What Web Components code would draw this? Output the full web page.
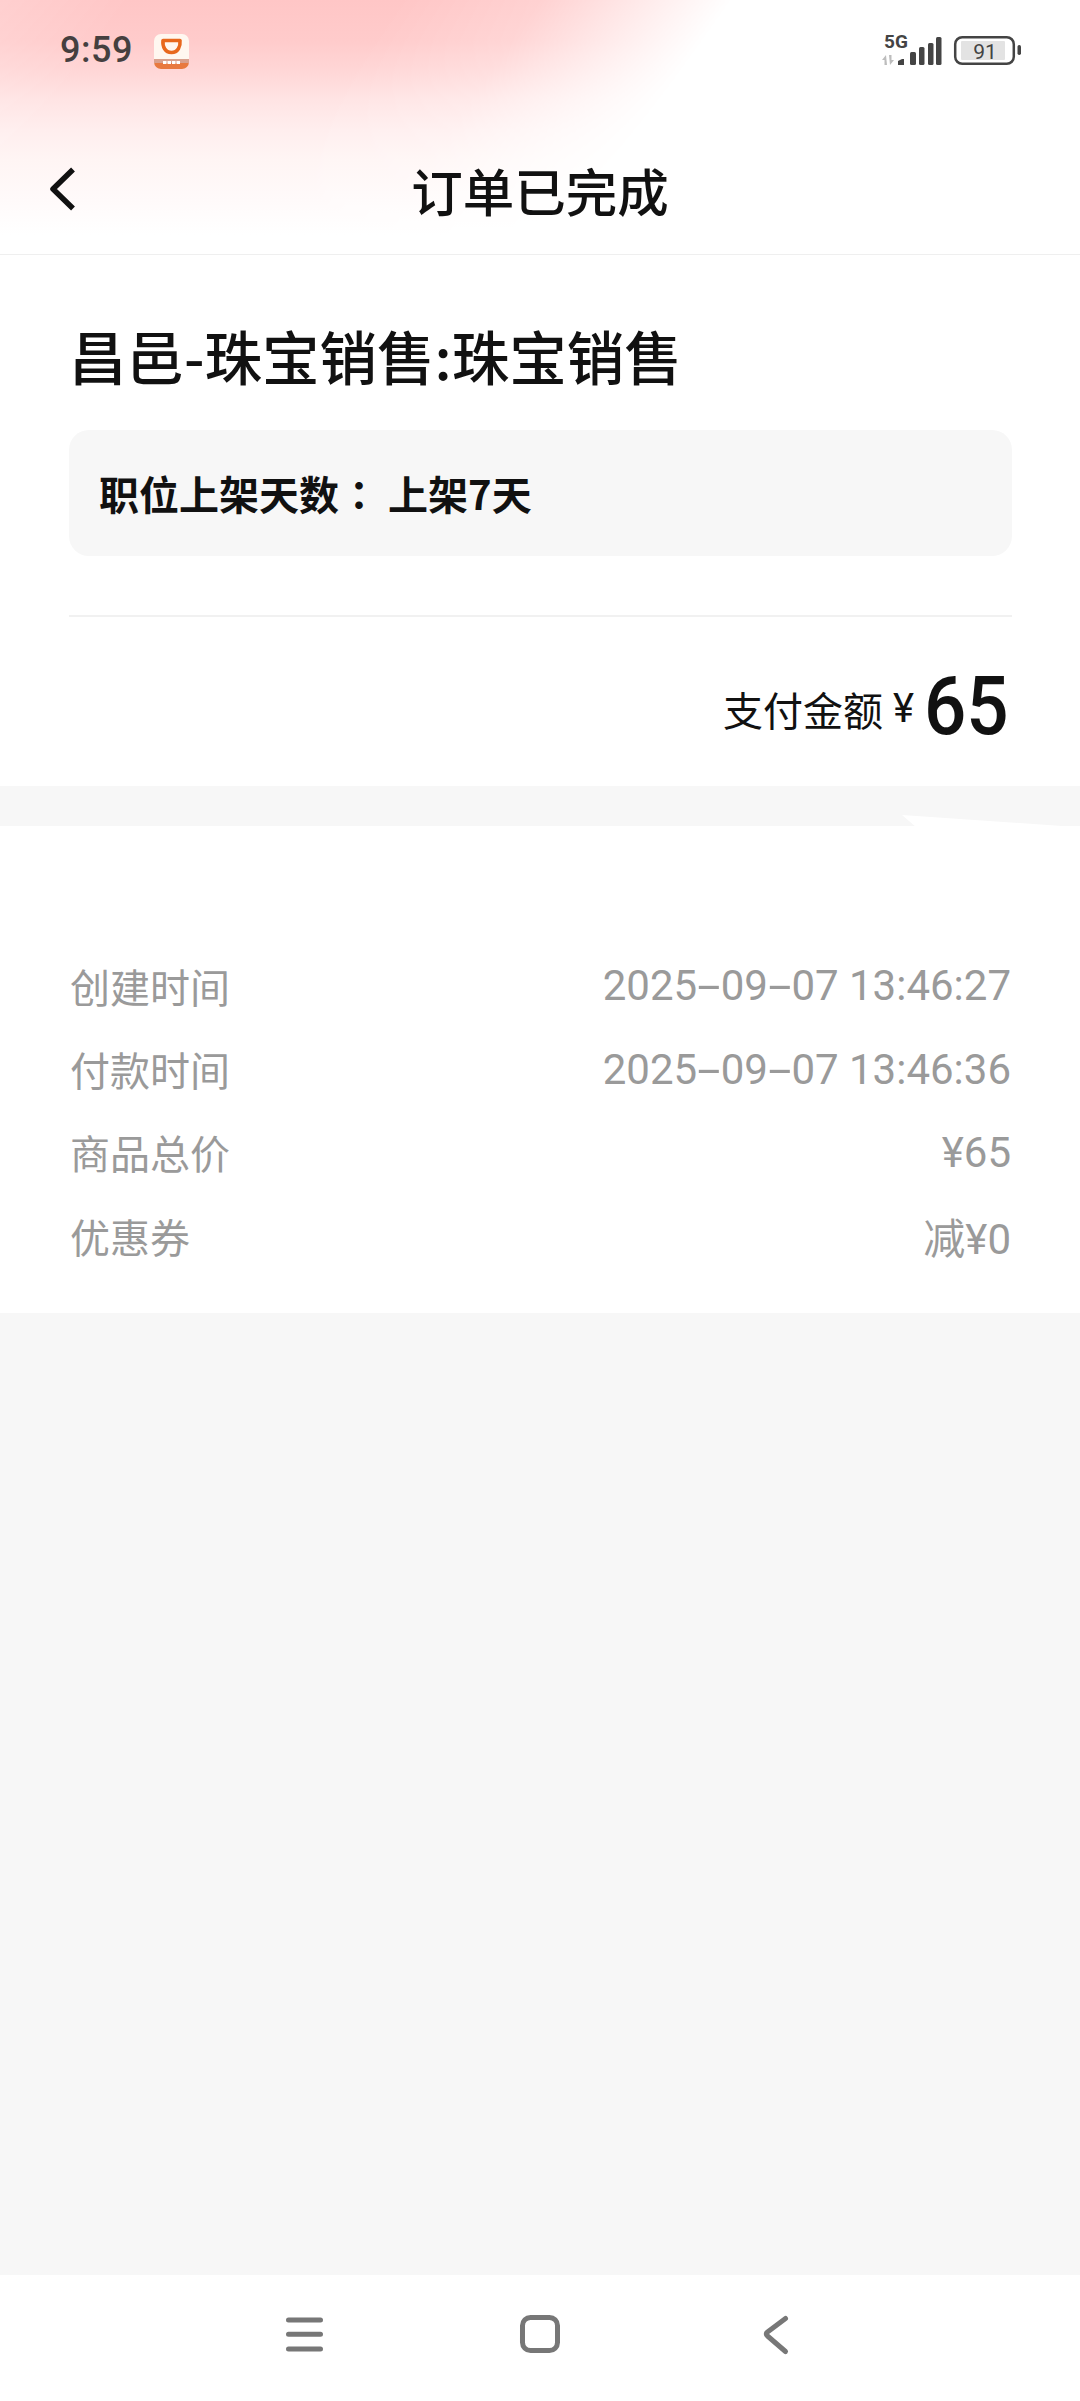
<!DOCTYPE html>
<html lang="zh">
<head>
<meta charset="utf-8">
<style>
html, body { margin: 0; height: 100%; }
body {
  display: flex;
  flex-direction: column;
  height: 2401px;
  background: #f7f7f7;
  font-family: Roboto, "Noto Sans CJK SC", sans-serif;
}
</style>
</head>
<body>
<order-header title-text="订单已完成"></order-header>
<order-summary amount="65">
  <span slot="name">昌邑-珠宝销售:珠宝销售</span>
  <span slot="spec">职位上架天数<span lang="zh-Hant" style="font-family:'Noto Sans CJK TC',sans-serif">：</span> 上架7天</span>
</order-summary>
<order-details>
  <detail-row label="创建时间" value="2025-09-07 13:46:27"></detail-row>
  <detail-row label="付款时间" value="2025-09-07 13:46:36"></detail-row>
  <detail-row label="商品总价" value="¥65"></detail-row>
  <detail-row label="优惠券" value="减¥0"></detail-row>
</order-details>
<nav-bar></nav-bar>
<script>
class OrderHeader extends HTMLElement {
    constructor() {
        super();
        this.attachShadow({ mode: 'open' });
        this.shadowRoot.innerHTML = `
            <style>
                :host {
                    display: block;
                    height: 254px;
                    border-bottom: 1px solid #efefef;
                    /* screen blend: the dark-to-white layer fades the pink out towards the right */
                    background:
                        linear-gradient(125deg, #2a2a2a 0, #000 107px, #000 328px, #333 443px, #aaa 533px, #fff 600px),
                        linear-gradient(to bottom, #ffc6c6 0, #ffcbcb 40px, #ffd6d6 70px, #ffe4e4 100px, #ffeeee 130px, #fff5f4 160px, #fffafa 200px, #fff 235px);
                    background-blend-mode: screen;
                }
                #status {
                    height: 100px;
                    display: flex;
                    align-items: center;
                    padding: 0 58px 0 60px;
                }
                #time { font-size: 36px; font-weight: 500; color: #453f3f; letter-spacing: .5px; }
                #app { width: 35px; height: 35px; margin: 3px 0 0 21px; }
                #right { margin-left: auto; display: flex; align-items: center; }
                #bar {
                    height: 130px;
                    padding-top: 24px;
                    display: grid;
                    grid-template-columns: 1fr auto 1fr;
                    align-items: center;
                    font-size: 51.500px;
                    font-family: "Noto Sans CJK SC", sans-serif;
                    font-weight: 500;
                    color: #111;
                }
                #back { width: 30px; height: 48px; margin-left: 48px; }
            </style>
            <div id="status">
                <span id="time">9:59</span>
                <svg id="app" viewBox="0 0 35 35">
                    <rect width="35" height="35" rx="7" fill="#fff7f0"/>
                    <path d="M0 25h35v3a7 7 0 0 1-7 7H7a7 7 0 0 1-7-7z" fill="#e8793f"/>
                    <path d="M0 25h35v4H0z" fill="#d9a08c"/>
                    <path d="M9 6.500h17c.6 6-2 12-8.500 12S8.400 12.500 9 6.500z" fill="none" stroke="#e8681d" stroke-width="3.600" stroke-linejoin="round"/>
                    <path d="M9 28.500h17" stroke="#fff" stroke-width="3" stroke-dasharray="3.500 1"/>
                </svg>
                <div id="right">
                    <svg width="141" height="44" viewBox="0 -4 141 44">
                        <text x="3" y="16" font-family="Roboto" font-weight="700" font-size="19" fill="#444">5G</text>
                        <path d="M5 23l-4 5h2.500v5H6zM9 33l4-5h-2.500v-5H8z" fill="#bdbdbd"/>
                        <path d="M17 29l4-2h2v6h-6z" fill="#444"/>
                        <rect x="29" y="20" width="6" height="13" rx="1.500" fill="#444"/>
                        <rect x="38" y="15" width="5.500" height="18" rx="1.500" fill="#444"/>
                        <rect x="47" y="11" width="5.500" height="22" rx="1.500" fill="#444"/>
                        <rect x="55" y="5" width="5.500" height="28" rx="1.500" fill="#444"/>
                        <rect x="74.200" y="5.200" width="58.600" height="26.600" rx="7" fill="none" stroke="#444" stroke-width="2.500"/>
                        <rect x="80" y="9" width="44" height="19" rx="1" fill="#e3e3e3"/>
                        <text x="104" y="26.500" text-anchor="middle" font-family="Roboto" font-size="21" fill="#444">91</text>
                        <rect x="136.500" y="13" width="3.500" height="10" rx="1.700" fill="#444"/>
                    </svg>
                </div>
            </div>
            <div id="bar">
                <svg id="back" viewBox="0 0 30 48"><path d="M25 4.500L5 24l20 19.500" fill="none" stroke="#111" stroke-width="5.500" stroke-linejoin="round"/></svg>
                <span>${this.getAttribute('title-text')}</span>
            </div>
        `;
    }
}
customElements.define('order-header', OrderHeader);

class OrderSummary extends HTMLElement {
    constructor() {
        super();
        this.attachShadow({ mode: 'open' });
        this.shadowRoot.innerHTML = `
            <style>
                :host {
                    display: block;
                    background: #fff;
                    padding: 0 68px 0 69px;
                    height: 531px;
                    font-family: "Noto Sans CJK SC", sans-serif;
                    color: #111;
                }
                #name {
                    height: 175px;
                    padding-top: 25px;
                    box-sizing: border-box;
                    display: flex;
                    align-items: center;
                    font-size: 57.500px;
                    font-weight: 500;
                }
                #spec {
                    height: 126px;
                    display: flex;
                    align-items: center;
                    padding: 0 30px;
                    background: #f7f7f7;
                    border-radius: 20px;
                    font-size: 40px;
                    font-weight: 700;
                }
                #pay {
                    margin-top: 59px;
                    border-top: 2px solid #f1f1f1;
                    height: 169px;
                    box-sizing: border-box;
                    padding-top: 16px;
                    display: flex;
                    justify-content: flex-end;
                    align-items: center;
                    font-size: 40px;
                }
                #yen { font-family: Roboto, sans-serif; margin: 0 10px; }
                #amount {
                    display: inline-block;
                    font-size: 81px;
                    font-weight: 500;
                    font-family: Roboto, sans-serif;
                    line-height: 1;
                    width: 88px;
                    margin-top: -4px;
                    white-space: nowrap;
                    transform: scaleX(.92);
                    transform-origin: left center;
                }
            </style>
            <div id="name"><slot name="name"></slot></div>
            <div id="spec"><slot name="spec"></slot></div>
            <div id="pay">
                <span>支付金额</span><span id="yen">¥</span><span id="amount">${this.getAttribute('amount')}</span>
            </div>
        `;
    }
}
customElements.define('order-summary', OrderSummary);

class OrderDetails extends HTMLElement {
    constructor() {
        super();
        this.attachShadow({ mode: 'open' });
        this.shadowRoot.innerHTML = `
            <style>
                :host {
                    display: flex;
                    flex-direction: column;
                    position: relative;
                    margin-top: 40px;
                    height: 487px;
                    box-sizing: border-box;
                    padding: 118px 69px 0 70px;
                    background: #fff;
                }
                /* sliver of white left over the grey gap in the reference */
                :host::before {
                    content: "";
                    position: absolute;
                    left: 902px;
                    top: -11px;
                    width: 160px;
                    height: 11px;
                    background: #fff;
                    clip-path: polygon(0 0, 100% 100%, 8% 100%);
                }
            </style>
            <slot></slot>
        `;
    }
}
customElements.define('order-details', OrderDetails);

class DetailRow extends HTMLElement {
    constructor() {
        super();
        this.attachShadow({ mode: 'open' });
        const value = this.getAttribute('value').replace(/-/g, '<span class="dash">-</span>');
        this.shadowRoot.innerHTML = `
            <style>
                :host {
                    display: flex;
                    justify-content: space-between;
                    align-items: center;
                    height: 83.400px;
                    font-size: 40px;
                    color: #9a9a9a;
                    font-family: "Noto Sans CJK SC", sans-serif;
                }
                #value { font-size: 42px; font-family: Roboto, "Noto Sans CJK SC", sans-serif; }
                .dash { display: inline-block; width: 23.500px; text-align: center; transform: scaleX(2); }
            </style>
            <span>${this.getAttribute('label')}</span>
            <span id="value">${value}</span>
        `;
    }
}
customElements.define('detail-row', DetailRow);

class NavBar extends HTMLElement {
    constructor() {
        super();
        this.attachShadow({ mode: 'open' });
        this.shadowRoot.innerHTML = `
            <style>
                :host {
                    display: flex;
                    margin-top: auto;
                    height: 126px;
                    background: #fff;
                    align-items: flex-start;
                    justify-content: center;
                    gap: 188px;
                    padding-top: 35px;
                    box-sizing: border-box;
                }
                svg { width: 48px; height: 48px; fill: none; stroke: #777; stroke-width: 5; stroke-linecap: round; stroke-linejoin: round; }
            </style>
            <svg viewBox="0 0 48 48"><path d="M8.500 10h32M8.500 24.300h32M8.500 39h32"/></svg>
            <svg viewBox="0 0 48 48"><rect x="6.500" y="7.500" width="35" height="33" rx="8"/></svg>
            <svg viewBox="0 0 48 48"><path d="M33.500 8.500L15.500 22q-2.500 2 0 4l18 15.500"/></svg>
        `;
    }
}
customElements.define('nav-bar', NavBar);
</script>
</body>
</html>
